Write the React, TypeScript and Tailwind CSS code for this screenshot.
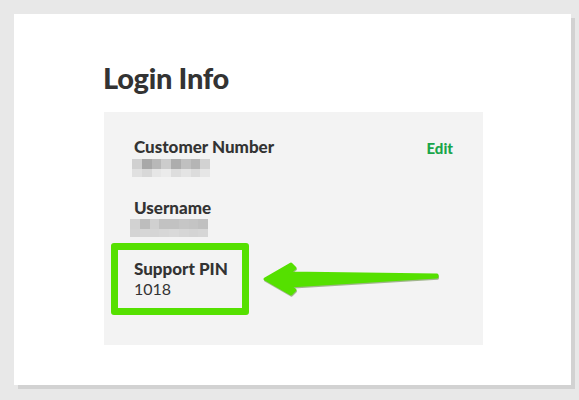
const customerTop = ["#d0d0d0", "#a8a8a8", "#b8b8b8", "#cccccc", "#adadad", "#c0c0c0", "#b5b5b5", "#d2d2d2"];
const customerBottom = ["#e0e0e0", "#d8d8d8", "#e6e6e6", "#ebebeb", "#dddddd", "#e4e4e4", "#dcdcdc", "#e6e6e6"];
const userTop = ["#d2d2d2", "#bdbdbd", "#d0d0d0", "#c2c2c2", "#c2c2c2", "#c6c6c6", "#c4c4c4", "#c0c0c0"];
const userBottom = ["#d4d4d4", "#d6d6d6", "#d5d5d5", "#d7d7d7", "#d9d9d9", "#d6d6d6", "#d4d4d4", "#d6d6d6"];

// Blurred value: two rows of pixelated grey blocks
function Mosaic({ top, bottom }: { top: string[]; bottom: string[] }) {
  return (
    <div className="flex w-[78px] flex-col">
      <div className="flex h-[10px]">
        {top.map((c, i) => (
          <div key={i} className="h-full flex-1" style={{ backgroundColor: c }} />
        ))}
      </div>
      <div className="flex h-[8px]">
        {bottom.map((c, i) => (
          <div key={i} className="h-full flex-1" style={{ backgroundColor: c }} />
        ))}
      </div>
    </div>
  );
}

function Arrow() {
  return (
    <svg
      className="pointer-events-none absolute left-[154px] top-[143px]"
      width="190"
      height="50"
      viewBox="0 0 190 50"
    >
      {/* shadow */}
      <polygon
        points="7,24 33,9 37,13 31,18 179,20 179,22 31,31 37,35 33,39"
        fill="#6b8f4a"
        stroke="#6b8f4a"
        strokeWidth="3"
        strokeLinejoin="round"
        transform="translate(0.5,1.2)"
        opacity="0.6"
      />
      <polygon
        points="7,24 33,9 37,13 31,18 179,20 179,22 31,31 37,35 33,39"
        fill="#55e000"
        stroke="#55e000"
        strokeWidth="3"
        strokeLinejoin="round"
      />
    </svg>
  );
}

export default function App() {
  return (
    <div
      className="h-[400px] w-[579px] bg-[#e8e8e8] pl-[14px] pt-[14px]"
      style={{ fontFamily: "Lato, 'Noto Sans', sans-serif" }}
    >
      <div className="h-[371px] w-[557px] bg-white pl-[90px] pt-[44px] shadow-[4px_4px_0_#d2d2d2]">
        <h1 className="-ml-px text-[29px] font-black leading-[40px] tracking-[-0.3px] text-[#333]">
          Login Info
        </h1>
        <div className="relative mt-[14px] h-[233px] w-[379px] bg-[#f3f3f3] px-[30px] pt-[24px] text-[#333]">
          <div className="flex items-start justify-between">
            <div>
              <div className="text-[17px] font-black leading-[22px]">Customer Number</div>
              <div className="-ml-[2px] mt-[1px]">
                <Mosaic top={customerTop} bottom={customerBottom} />
              </div>
            </div>
            <button type="button" className="mt-[2px] text-[15px] font-black leading-[20px] text-[#19a54a]">
              Edit
            </button>
          </div>

          <div className="mt-[20px] text-[17px] font-black leading-[22px]">Username</div>
          <div className="-ml-[4px]">
            <Mosaic top={userTop} bottom={userBottom} />
          </div>

          <div className="-ml-[23px] mt-[6px] h-[72px] w-[138px] rounded-[3px] border-[7px] border-[#55e000] pl-[16px] pt-[9px]">
            <div className="text-[17px] font-black leading-[20px]">Support PIN</div>
            <div className="text-[16px] leading-[20px]">1018</div>
          </div>

          <Arrow />
        </div>
      </div>
    </div>
  );
}
